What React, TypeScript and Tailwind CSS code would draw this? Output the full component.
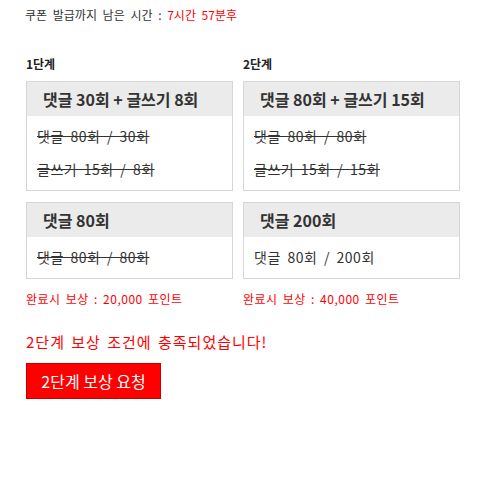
const font = { fontFamily: '"Noto Sans CJK KR", "Noto Sans", sans-serif' };

type Stage = {
  title: string;
  boxes: { head: string; lines: { text: string; done: boolean }[] }[];
  reward: string;
  width: string;
};

const stages: Stage[] = [
  {
    title: "1단계",
    width: "w-[207px]",
    boxes: [
      {
        head: "댓글 30회 + 글쓰기 8회",
        lines: [
          { text: "댓글 80회 / 30회", done: true },
          { text: "글쓰기 15회 / 8회", done: true },
        ],
      },
      { head: "댓글 80회", lines: [{ text: "댓글 80회 / 80회", done: true }] },
    ],
    reward: "완료시 보상 : 20,000 포인트",
  },
  {
    title: "2단계",
    width: "w-[217px]",
    boxes: [
      {
        head: "댓글 80회 + 글쓰기 15회",
        lines: [
          { text: "댓글 80회 / 80회", done: true },
          { text: "글쓰기 15회 / 15회", done: true },
        ],
      },
      { head: "댓글 200회", lines: [{ text: "댓글 80회 / 200회", done: false }] },
    ],
    reward: "완료시 보상 : 40,000 포인트",
  },
];

function MissionBox({ head, lines }: Stage["boxes"][number]) {
  return (
    <div className="border border-[#d6d6d6] bg-white">
      <div className="h-[34px] bg-[#ebebeb] pl-4 text-[16px] font-bold leading-[34px] text-[#333]">
        {head}
      </div>
      <div className="px-[10px] py-[4px] text-[14px] leading-[33px] tracking-[0.5px] text-[#333] [word-spacing:3px]">
        {lines.map((l) => (
          <div key={l.text} className={l.done ? "line-through decoration-[#333]" : ""}>
            {l.text}
          </div>
        ))}
      </div>
    </div>
  );
}

export default function App() {
  return (
    <div className="min-h-screen bg-white px-[26px] pt-[6px] text-[#333]" style={font}>
      <p className="-ml-px text-[12px] leading-[18px] [word-spacing:3px]">
        쿠폰 발급까지 남은 시간 : <span className="text-[#ff0000]">7시간 57분후</span>
      </p>

      <div className="mt-[32px] flex gap-[10px]">
        {stages.map((s) => (
          <div key={s.title} className={s.width}>
            <h3 className="text-[12px] font-bold leading-[16px] text-[#222]">{s.title}</h3>
            <div className="mt-[9px] flex flex-col gap-[11px]">
              {s.boxes.map((b) => (
                <MissionBox key={b.head} {...b} />
              ))}
            </div>
            <p className="mt-[12px] text-[12px] leading-[16px] tracking-[0.5px] text-[#ff0000] [word-spacing:2px]">
              {s.reward}
            </p>
          </div>
        ))}
      </div>

      <p className="mt-[25px] text-[15px] leading-[20px] tracking-[1px] text-[#ff0000] [word-spacing:2px]">
        2단계 보상 조건에 충족되었습니다!
      </p>
      <button className="mt-[11px] h-[36px] w-[135px] border border-[#c40000] bg-[#ff0000] text-[16px] text-white">
        2단계 보상 요청
      </button>
    </div>
  );
}
